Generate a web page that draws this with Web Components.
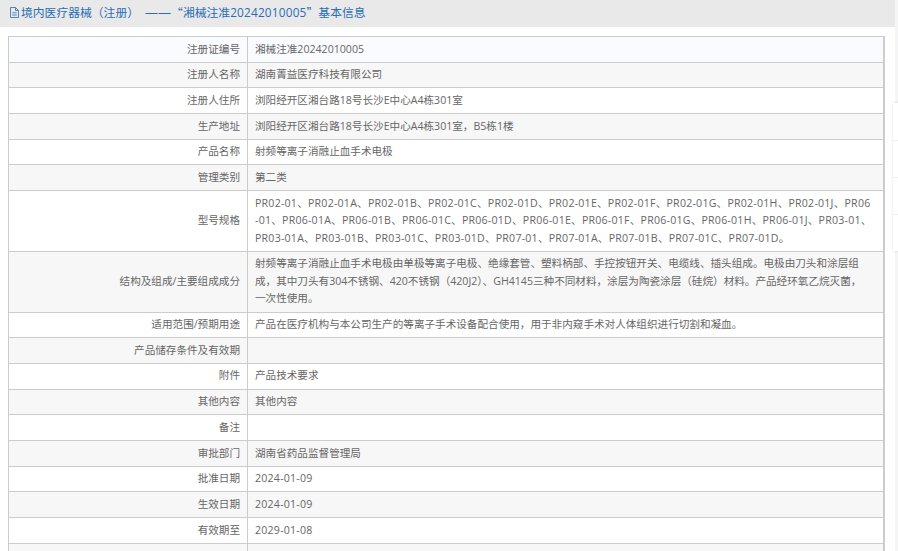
<!DOCTYPE html>
<html lang="zh">
<head>
<meta charset="utf-8">
<title>基本信息</title>
<style>
  html, body { margin: 0; height: 551px; overflow: hidden; background: #f5f5f5; }
  body { font-family: "Open Sans", "Noto Sans CJK SC", sans-serif; position: relative; }
  .cjk { font-family: "Noto Sans CJK SC", sans-serif; }
  .dash { font-size: 13px; }
  .num { letter-spacing: .2px; }
</style>
</head>
<body>
<device-page>
  <info-header slot="header">境内医疗器械（注册）  <span class="dash">——</span><span class="cjk">“</span>湘械注准<span class="num">20242010005</span><span class="cjk">”</span>基本信息</info-header>
  <info-table>
    <info-row label="注册证编号">湘械注准20242010005</info-row>
    <info-row label="注册人名称">湖南菁益医疗科技有限公司</info-row>
    <info-row label="注册人住所">浏阳经开区湘台路18号长沙E中心A4栋301室</info-row>
    <info-row label="生产地址">浏阳经开区湘台路18号长沙E中心A4栋301室，B5栋1楼</info-row>
    <info-row label="产品名称">射频等离子消融止血手术电极</info-row>
    <info-row label="管理类别">第二类</info-row>
    <info-row label="型号规格" spaced>PR02-01、PR02-01A、PR02-01B、PR02-01C、PR02-01D、PR02-01E、PR02-01F、PR02-01G、PR02-01H、PR02-01J、PR06-01、PR06-01A、PR06-01B、PR06-01C、PR06-01D、PR06-01E、PR06-01F、PR06-01G、PR06-01H、PR06-01J、PR03-01、PR03-01A、PR03-01B、PR03-01C、PR03-01D、PR07-01、PR07-01A、PR07-01B、PR07-01C、PR07-01D。</info-row>
    <info-row label="结构及组成/主要组成成分">射频等离子消融止血手术电极由单极等离子电极、绝缘套管、塑料柄部、手控按钮开关、电缆线、插头组成。电极由刀头和涂层组成，其中刀头有304不锈钢、420不锈钢（420J2）、GH4145三种不同材料，涂层为陶瓷涂层（硅烷）材料。产品经环氧乙烷灭菌，<br>一次性使用。</info-row>
    <info-row label="适用范围/预期用途">产品在医疗机构与本公司生产的等离子手术设备配合使用，用于非内窥手术对人体组织进行切割和凝血。</info-row>
    <info-row label="产品储存条件及有效期"></info-row>
    <info-row label="附件">产品技术要求</info-row>
    <info-row label="其他内容">其他内容</info-row>
    <info-row label="备注"></info-row>
    <info-row label="审批部门">湖南省药品监督管理局</info-row>
    <info-row label="批准日期" spaced>2024-01-09</info-row>
    <info-row label="生效日期" spaced>2024-01-09</info-row>
    <info-row label="有效期至" spaced>2029-01-08</info-row>
    <info-row label=""></info-row>
  </info-table>
</device-page>
<side-rail></side-rail>
<script>
  // page shell: header bar over the table card, white up to the grey page edge
  class DevicePage extends HTMLElement {
    constructor() {
      super();
      this.attachShadow({ mode: 'open' }).innerHTML = `
        <style>
          :host { display: flex; flex-direction: column; width: 895px; height: 551px; overflow: hidden; background: #fff; }
          .body { padding: 9px 10px 0 8px; }
        </style>
        <slot name="header"></slot>
        <div class="body"><slot></slot></div>`;
    }
  }

  class InfoHeader extends HTMLElement {
    constructor() {
      super();
      this.attachShadow({ mode: 'open' }).innerHTML = `
        <style>
          :host { display: flex; align-items: center; flex: none; height: 24px; background: #e9e9e9;
                  padding: 0 0 3px 10px; color: #2a6db5; font-size: 11.8px; white-space: pre; }
          svg { width: 9px; height: 11px; flex: none; margin-right: 2px; }
        </style>
        <svg viewBox="0 0 9 11" fill="none" stroke="#2a6db5" stroke-width=".8">
          <path d="M.5.5h5l3 3v7h-8z"/><path d="M5.5.5v3h3M2.2 5.8h4.6M2.2 8h4.6"/>
        </svg>
        <span><slot></slot></span>`;
    }
  }

  class InfoTable extends HTMLElement {
    constructor() {
      super();
      this.attachShadow({ mode: 'open' }).innerHTML = `
        <style>
          :host { display: block; border: 1px solid #ccc; border-right-width: 2px; }
          ::slotted(info-row:nth-child(odd)) { --row-bg: #fff; }
          ::slotted(info-row:nth-child(even)) { --row-bg: #f7f7f7; }
          ::slotted(info-row:first-child) { --row-bg: #fafbfe; }
        </style>
        <slot></slot>`;
    }
  }

  class InfoRow extends HTMLElement {
    constructor() {
      super();
      this.attachShadow({ mode: 'open' }).innerHTML = `
        <style>
          :host { display: grid; grid-template-columns: 239px 1fr; background: var(--row-bg, #fff);
                  border-bottom: 1px solid #ccc; color: #666; font-size: 10.6px; line-height: 17.5px; }
          :host(:last-child) { border-bottom: 0; }
          .label { display: flex; align-items: center; justify-content: flex-end; padding: 3.6px 7px;
                   border-right: 1px solid #ccc; min-height: 17.5px; }
          .value { padding: 3.6px 9px 3.6px 7px; min-height: 17.5px; word-break: break-all; }
          :host([spaced]) .value { letter-spacing: .23px; }
        </style>
        <div class="label"></div>
        <div class="value"><slot></slot></div>`;
    }
    connectedCallback() {
      this.shadowRoot.querySelector('.label').textContent = this.getAttribute('label') || '';
    }
  }

  // floating toolbar, only its left edge is inside the window
  class SideRail extends HTMLElement {
    constructor() {
      super();
      this.attachShadow({ mode: 'open' }).innerHTML = `
        <style>
          :host { position: absolute; left: 893px; top: 103px; width: 40px; display: grid;
                  grid-auto-rows: 37px; background: #fff; box-shadow: 0 0 3px rgba(0,0,0,.12); }
          div + div { border-top: 1px solid #eee; }
        </style>
        <div></div><div></div><div></div><div></div>`;
    }
  }

  customElements.define('device-page', DevicePage);
  customElements.define('info-header', InfoHeader);
  customElements.define('info-table', InfoTable);
  customElements.define('info-row', InfoRow);
  customElements.define('side-rail', SideRail);
</script>
</body>
</html>
